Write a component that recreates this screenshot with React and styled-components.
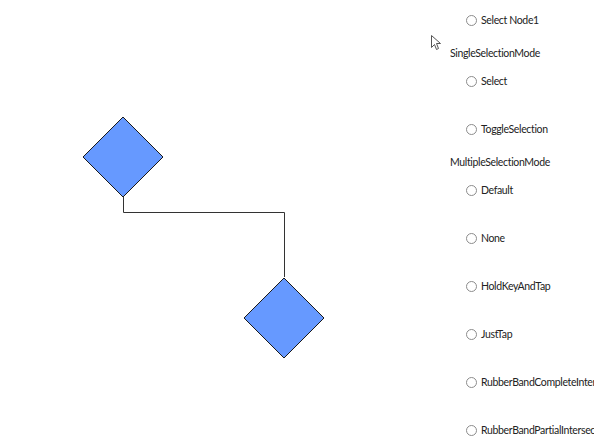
import React from "react";
import styled, { createGlobalStyle } from "styled-components";

const GlobalStyle = createGlobalStyle`
  html, body {
    margin: 0;
    padding: 0;
    background: #ffffff;
  }
  body {
    font-family: Lato, "Open Sans", sans-serif;
  }
`;

const singleModes = ["Select", "ToggleSelection"];
const multipleModes = [
  "Default",
  "None",
  "HoldKeyAndTap",
  "JustTap",
  "RubberBandCompleteIntersection",
  "RubberBandPartialIntersection",
];

const Radio = ({ label }) => (
  <RadioRow>
    <input type="radio" name={label} />
    <span>{label}</span>
  </RadioRow>
);

const App = () => {
  return (
    <Page>
      <GlobalStyle />
      <Diagram>
        <svg width="450" height="445" viewBox="0 0 450 445">
          <polyline
            points="123.5,196 123.5,212.5 284.5,212.5 284.5,277"
            fill="none"
            stroke="#333"
            strokeWidth="1"
          />
          <polygon
            points="123,117 163,157 123,197 83,157"
            fill="#6699ff"
            stroke="#1a1a1a"
            strokeWidth="1"
          />
          <polygon
            points="284,278 324,318 284,358 244,318"
            fill="#6699ff"
            stroke="#1a1a1a"
            strokeWidth="1"
          />
        </svg>
        <Cursor width="11" height="16" viewBox="0 0 11 16">
          <path
            d="M0.5 0.5 L0.5 12.5 L3.5 9.5 L5.5 14.5 L7.5 13.5 L5.5 8.5 L9.5 8.5 Z"
            fill="#fff"
            stroke="#555"
            strokeWidth="1"
          />
        </Cursor>
      </Diagram>
      <Panel>
        <Group>
          <Radio label="Select Node1" />
        </Group>
        <Heading>SingleSelectionMode</Heading>
        <Group>
          {singleModes.map((m) => (
            <Radio key={m} label={m} />
          ))}
        </Group>
        <Heading>MultipleSelectionMode</Heading>
        <Group>
          {multipleModes.map((m) => (
            <Radio key={m} label={m} />
          ))}
        </Group>
      </Panel>
    </Page>
  );
};

export default App;

const Page = styled.div`
  display: flex;
  width: 600px;
  height: 445px;
  overflow: hidden;
`;

const Diagram = styled.div`
  position: relative;
  width: 450px;
  height: 445px;
  flex: none;
  svg {
    display: block;
  }
`;

const Cursor = styled.svg`
  position: absolute;
  left: 431px;
  top: 35px;
`;

const Panel = styled.div`
  width: 144px;
  padding-top: 10px;
  display: flex;
  flex-direction: column;
  overflow: hidden;
  white-space: nowrap;
  color: #222;
  font-size: 10.5px;
  letter-spacing: -0.35px;
`;

const Group = styled.div`
  display: flex;
  flex-direction: column;
  gap: 28px;
  padding-left: 16px;
`;

const Heading = styled.div`
  height: 16px;
  line-height: 16px;
  margin: 15px 0 10px 0;
`;

const RadioRow = styled.label`
  display: flex;
  align-items: center;
  height: 20px;
  gap: 4px;
  input {
    appearance: none;
    flex: none;
    margin: 0;
    width: 11px;
    height: 11px;
    border: 1px solid #8c8c8c;
    border-radius: 50%;
    background: #fff;
    box-sizing: border-box;
  }
`;
